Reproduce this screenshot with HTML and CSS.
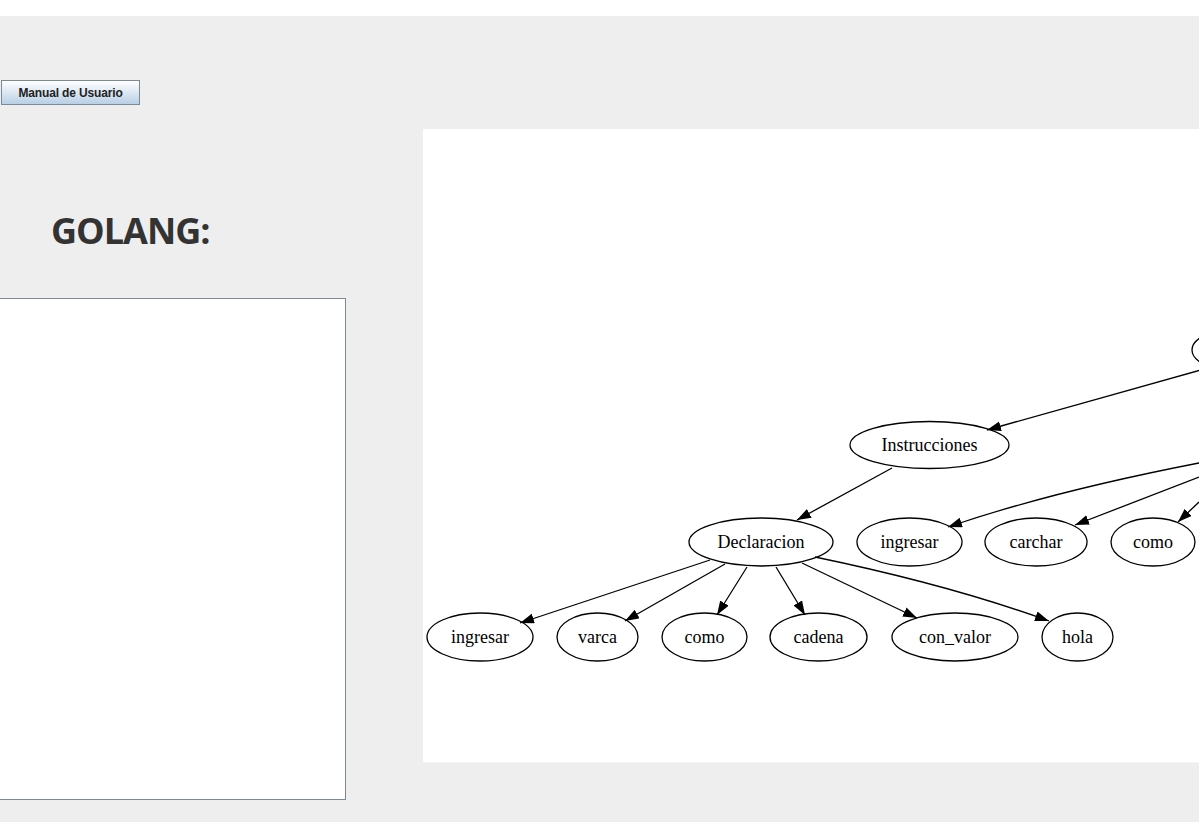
FILE: index.html
```html
<!DOCTYPE html>
<html lang="es">
<head>
  <meta charset="UTF-8" />
  <title>Compilador GOLANG</title>
  <link rel="stylesheet" href="styles.css">
</head>
<body>
  <div class="top-strip"></div>

  <main class="frame">
    <section class="editor-column">
      <button class="manual-button">Manual de Usuario</button>
      <h1 class="lang-title">GOLANG:</h1>
      <textarea class="code-input" spellcheck="false"></textarea>
    </section>

    <section class="tree-panel">
      <svg class="tree" width="776" height="634" viewBox="423 129 776 634">
        <defs>
          <marker id="arrow" markerUnits="userSpaceOnUse" markerWidth="15" markerHeight="11"
                  refX="14" refY="5" orient="auto">
            <path d="M0,0 L14,5 L0,10 z" fill="#000" />
          </marker>
        </defs>

        <!-- edges -->
        <g class="edges">
          <path d="M1215 366 L987 430" />
          <path d="M892 468 L797 520" />
          <path d="M1199 463 Q1050 492 948 527" />
          <path d="M1199 477 L1075 525" />
          <path d="M1199 502 L1178 522" />
          <path d="M710 560 L520 623" />
          <path d="M725 564 L625 621" />
          <path d="M747 567 L717 615" />
          <path d="M776 567 L805 615" />
          <path d="M802 563 L917 618" />
          <path d="M815 557 Q950 585 1049 621" />
        </g>

        <!-- nodes -->
        <g class="nodes">
          <ellipse cx="1252" cy="350" rx="60" ry="24" />

          <ellipse cx="929.5" cy="445" rx="79.5" ry="23.5" />
          <text x="929.5" y="451">Instrucciones</text>

          <ellipse cx="761" cy="542" rx="72" ry="24" />
          <text x="761" y="548">Declaracion</text>
          <ellipse cx="909.5" cy="542" rx="52.5" ry="24" />
          <text x="909.5" y="548">ingresar</text>
          <ellipse cx="1036" cy="542" rx="51" ry="24" />
          <text x="1036" y="548">carchar</text>
          <ellipse cx="1153" cy="542" rx="42" ry="24" />
          <text x="1153" y="548">como</text>

          <ellipse cx="480" cy="637" rx="53" ry="24" />
          <text x="480" y="643">ingresar</text>
          <ellipse cx="597.5" cy="637" rx="40.5" ry="24" />
          <text x="597.5" y="643">varca</text>
          <ellipse cx="704.5" cy="637" rx="42.5" ry="24" />
          <text x="704.5" y="643">como</text>
          <ellipse cx="818.5" cy="637" rx="48.5" ry="24" />
          <text x="818.5" y="643">cadena</text>
          <ellipse cx="955" cy="637" rx="63" ry="24" />
          <text x="955" y="643">con_valor</text>
          <ellipse cx="1077.5" cy="637" rx="35.5" ry="24" />
          <text x="1077.5" y="643">hola</text>
        </g>
      </svg>
    </section>
  </main>
</body>
</html>
```

FILE: styles.css
```css
:root {
  --panel-bg: #eeeeee;
  --border-color: #7a8a99;
  --text-dark: #333333;
}

* {
  box-sizing: border-box;
}

html, body {
  margin: 0;
  padding: 0;
  height: 822px;
  overflow: hidden;
}

body {
  background: var(--panel-bg);
  font-family: "Liberation Sans", Arial, sans-serif;
  color: var(--text-dark);
}

.top-strip {
  height: 16px;
  background: #fff;
}

.frame {
  display: flex;
  align-items: flex-start;
  height: 806px;
}

.editor-column {
  width: 346px;
  flex: none;
  display: flex;
  flex-direction: column;
  align-items: flex-start;
  padding-top: 64px;
}

.manual-button {
  margin: 0 0 0 1px;
  width: 139px;
  height: 25px;
  padding: 0;
  border: 1px solid var(--border-color);
  border-radius: 0;
  background: linear-gradient(to bottom, #ffffff 0%, #eef3f9 25%, #b8cfe5 100%);
  color: #222;
  font-family: "Liberation Sans", Arial, sans-serif;
  font-size: 12px;
  font-weight: bold;
  letter-spacing: -0.15px;
}

.lang-title {
  margin: 108px 0 0 51px;
  font-family: "Open Sans", "Noto Sans", sans-serif;
  font-size: 36px;
  line-height: 36px;
  font-weight: 700;
  letter-spacing: -1px;
  color: var(--text-dark);
}

.code-input {
  margin: 49px 0 0 -1px;
  width: 347px;
  height: 502px;
  border: 1px solid var(--border-color);
  border-radius: 0;
  background: #fff;
  resize: none;
  outline: none;
  padding: 2px;
  font-family: "Liberation Mono", monospace;
  font-size: 13px;
}

.tree-panel {
  flex: none;
  margin: 113px 0 0 77px;
  width: 776px;
  height: 634px;
  background: #fff;
  border-bottom: 1px solid #f6f6f6;
  overflow: hidden;
}

.tree {
  display: block;
}

.tree .edges path {
  fill: none;
  stroke: #000;
  stroke-width: 1.3;
  marker-end: url(#arrow);
}

.tree .nodes ellipse {
  fill: none;
  stroke: #000;
  stroke-width: 1.3;
}

.tree .nodes text {
  font-family: "Liberation Serif", "Times New Roman", serif;
  font-size: 18px;
  text-anchor: middle;
  fill: #000;
}
```
